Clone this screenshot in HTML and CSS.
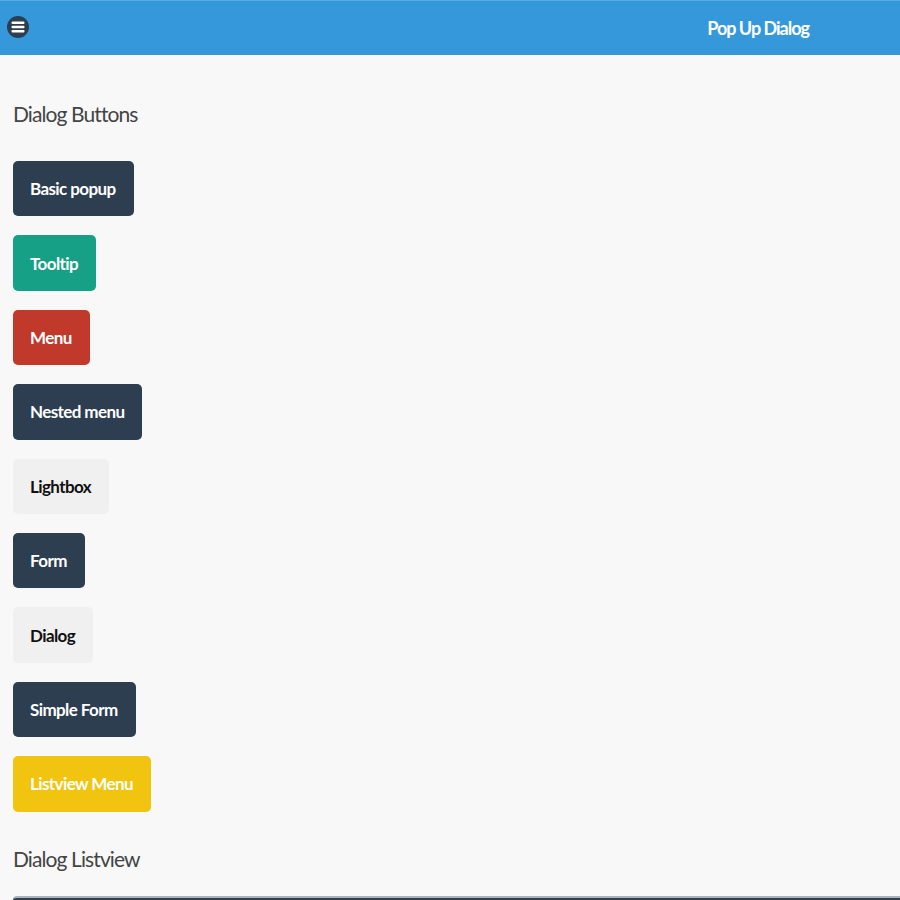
FILE: index.html
```html
<!DOCTYPE html>
<html>
<head>
<meta charset="utf-8">
<link rel="stylesheet" href="styles.css">
</head>
<body>
<header class="topbar">
  <span class="menu-btn">
    <svg width="22" height="22" viewBox="0 0 22 22"><circle cx="11" cy="11" r="11" fill="#2c3e50"/><rect x="4.5" y="5.5" width="13" height="2.4" rx="1" fill="#fff"/><rect x="4.5" y="9.8" width="13" height="2.4" rx="1" fill="#fff"/><rect x="4.5" y="14.1" width="13" height="2.4" rx="1" fill="#fff"/></svg>
  </span>
  <span class="title">Pop Up Dialog</span>
</header>
<main class="content">
  <h2 class="section">Dialog Buttons</h2>
  <div class="buttons">
    <span class="btn dark">Basic popup</span>
    <span class="btn teal">Tooltip</span>
    <span class="btn red">Menu</span>
    <span class="btn dark">Nested menu</span>
    <span class="btn light">Lightbox</span>
    <span class="btn dark">Form</span>
    <span class="btn light">Dialog</span>
    <span class="btn dark">Simple Form</span>
    <span class="btn yellow">Listview Menu</span>
  </div>
  <h2 class="section list-head">Dialog Listview</h2>
  <div class="listbar"></div>
</main>
</body>
</html>
```
FILE: styles.css
```css
html, body {
  margin: 0;
  padding: 0;
  background: #f8f8f8;
  font-family: Lato, "Liberation Sans", sans-serif;
  overflow: hidden;
  height: 900px;
}
.topbar {
  height: 54px;
  background: #3498db;
  border-top: 1px solid #5aa9e0;
  display: flex;
  align-items: center;
  padding: 0 7px;
}
.menu-btn {
  display: flex;
  width: 22px;
  height: 22px;
  margin-top: -3px;
}
.title {
  margin-left: auto;
  margin-right: 84px;
  color: #fff;
  font-weight: 700;
  font-size: 18px;
  letter-spacing: -1px;
}
.content {
  padding: 0 13px;
}
.section {
  margin: 0;
  font-weight: 400;
  font-size: 21px;
  color: #444;
  letter-spacing: -0.9px;
  padding-top: 46px;
  line-height: 26px;
}
.buttons {
  display: flex;
  flex-direction: column;
  align-items: flex-start;
  gap: 19px;
  margin-top: 34px;
}
.btn {
  display: flex;
  align-items: center;
  height: 55.4px;
  padding: 0 18px 0 17px;
  border-radius: 5px;
  font-weight: 700;
  font-size: 17px;
  letter-spacing: -0.6px;
  color: #fff;
  box-sizing: border-box;
}
.dark { background: #2c3e50; }
.teal { background: #16a085; }
.red { background: #c0392b; }
.light { background: #f0f0f0; color: #111; }
.yellow { background: #f1c40f; }
.list-head {
  padding-top: 34px;
}
.listbar {
  margin-top: 24px;
  height: 20px;
  margin-right: -20px;
  background: #2c3e50;
  border-top: 2px solid #aab4bf;
  border-radius: 4px 0 0 0;
}
```
